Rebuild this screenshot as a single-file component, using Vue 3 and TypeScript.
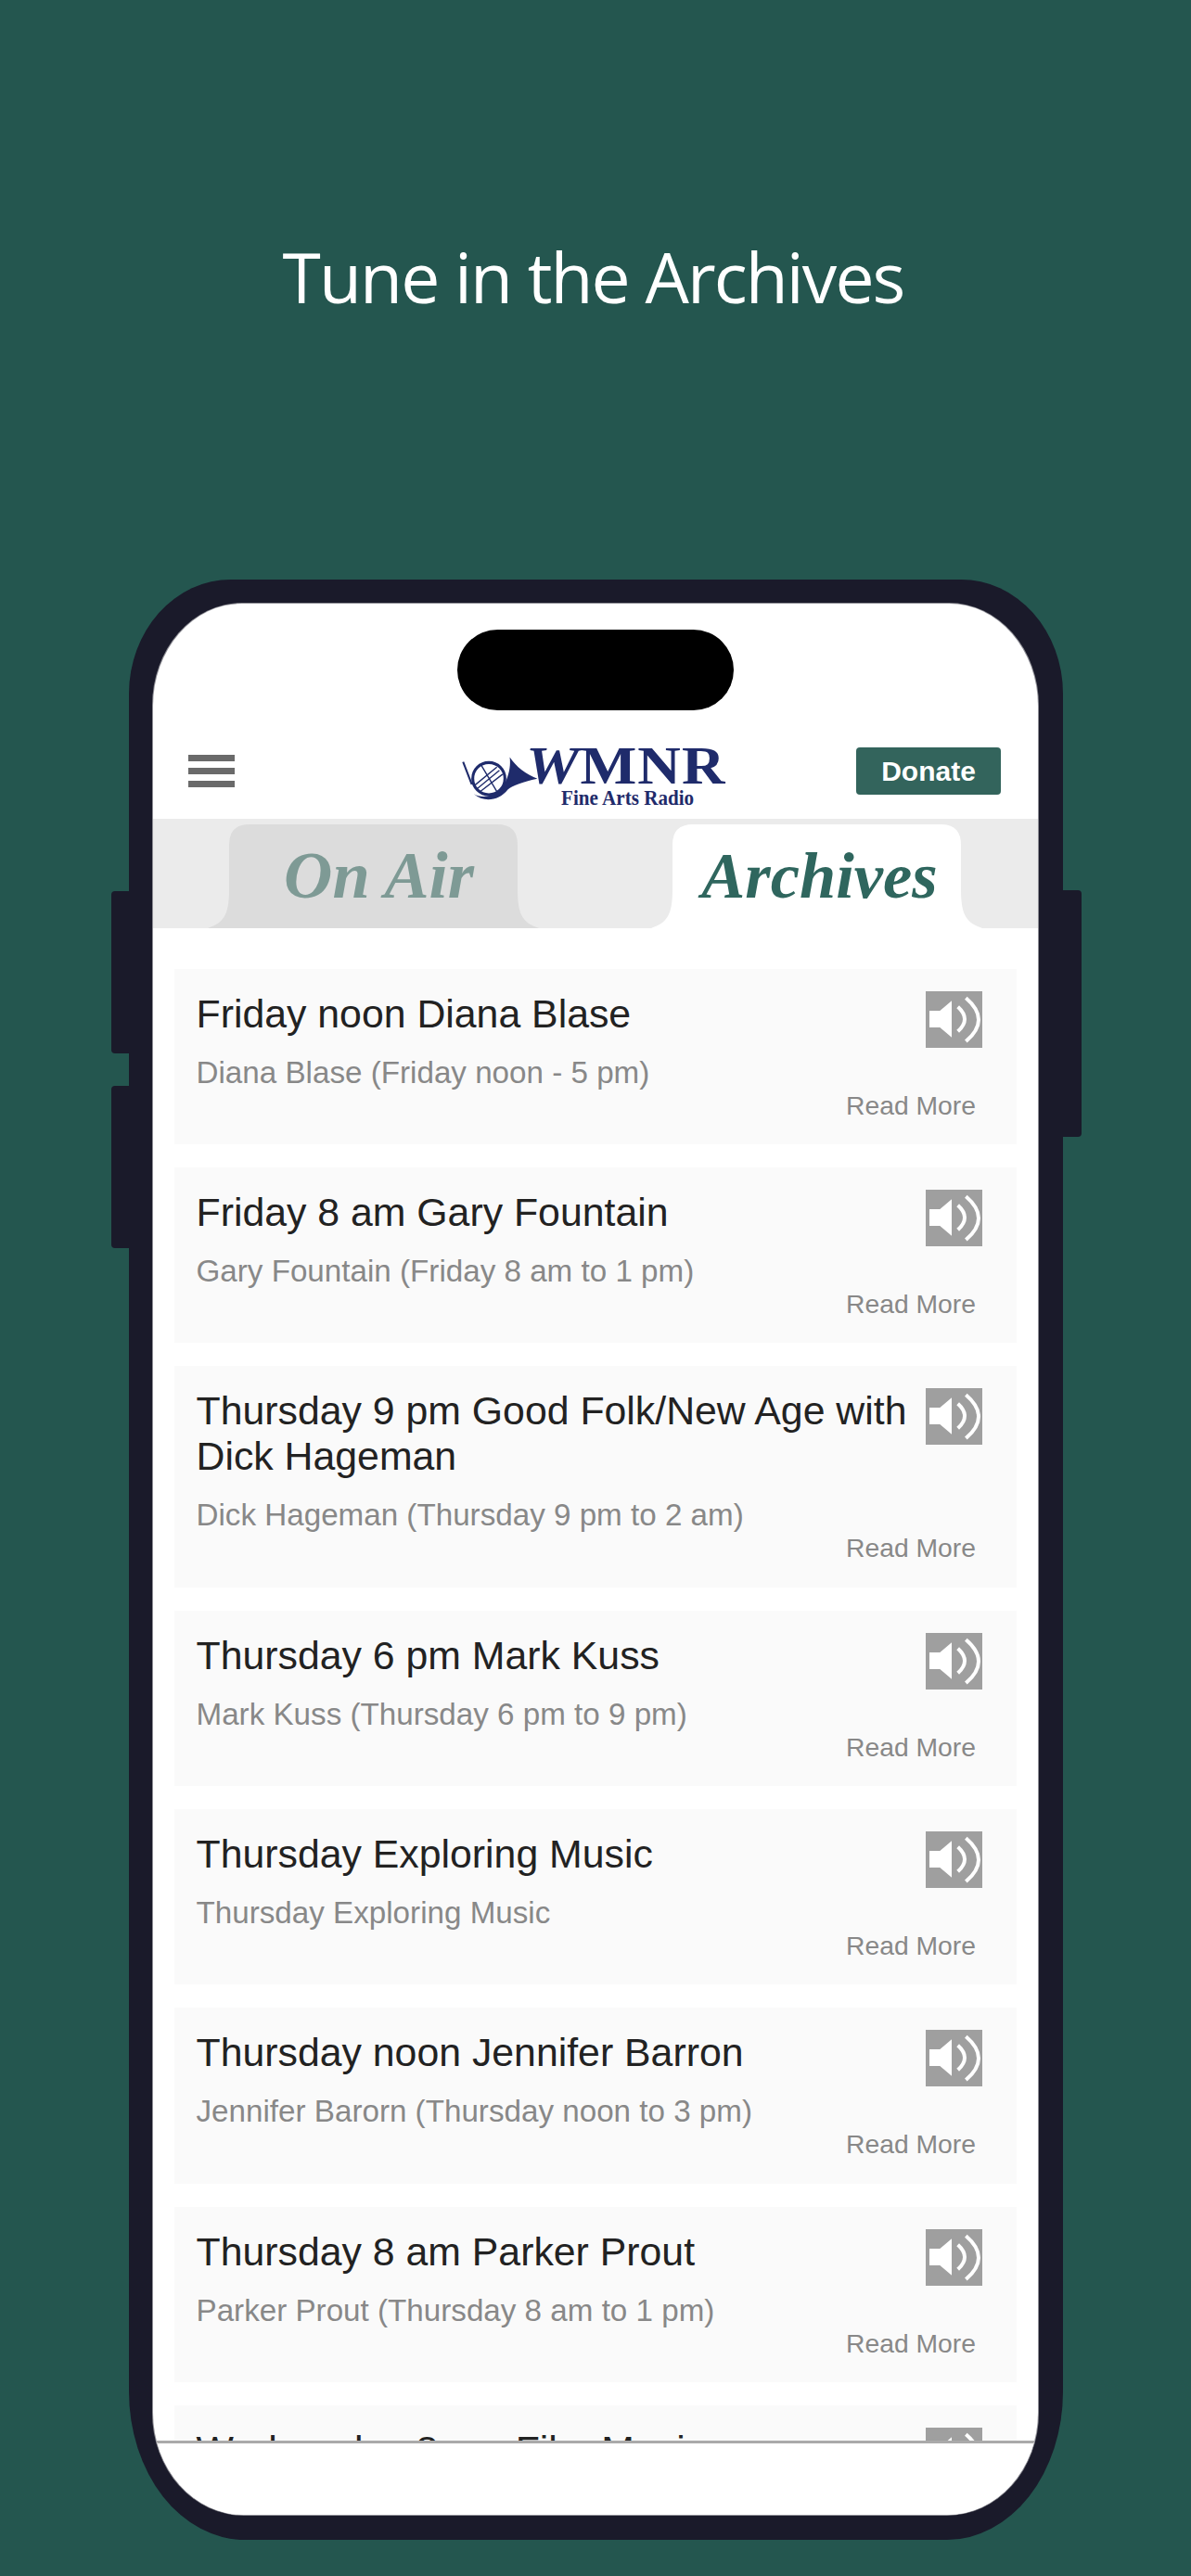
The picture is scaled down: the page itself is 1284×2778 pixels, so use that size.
<script setup lang="ts">
interface Show {
  title: string
  host: string
}

const shows: Show[] = [
  { title: 'Friday noon Diana Blase', host: 'Diana Blase (Friday noon - 5 pm)' },
  { title: 'Friday 8 am Gary Fountain', host: 'Gary Fountain (Friday 8 am to 1 pm)' },
  { title: 'Thursday 9 pm Good Folk/New Age with Dick Hageman', host: 'Dick Hageman (Thursday 9 pm to 2 am)' },
  { title: 'Thursday 6 pm Mark Kuss', host: 'Mark Kuss (Thursday 6 pm to 9 pm)' },
  { title: 'Thursday Exploring Music', host: 'Thursday Exploring Music' },
  { title: 'Thursday noon Jennifer Barron', host: 'Jennifer Barorn (Thursday noon to 3 pm)' },
  { title: 'Thursday 8 am Parker Prout', host: 'Parker Prout (Thursday 8 am to 1 pm)' },
  { title: 'Wednesday 8 pm Film Music', host: 'Film Music' }
]

const tabPath =
  'M0 112C16 106 23 100 23 70L23 22Q23 0 45 0L312 0Q334 0 334 22L334 70C334 100 341 106 357 112Z'
</script>

<template>
  <div class="page">
    <h1 class="headline">Tune in the Archives</h1>
    <div class="phone">
      <span class="side side-a"></span>
      <span class="side side-b"></span>
      <span class="side side-c"></span>
      <div class="screen">
        <div class="status"><div class="island"></div></div>
        <header class="topbar">
          <div class="burger"><span></span><span></span><span></span></div>
          <div class="logo">
            <svg class="horn" viewBox="80 95 245 150" aria-hidden="true">
              <circle cx="165" cy="172" r="50" fill="none" stroke="#1f2b6b" stroke-width="9" />
              <path d="M85 120L112 190" stroke="#1f2b6b" stroke-width="6" fill="none" />
              <path d="M122 192L190 136M128 204L198 146M136 214L208 158M140 128L190 212" stroke="#1f2b6b" stroke-width="4" fill="none" />
              <path d="M118 220C150 248 198 240 224 206C236 194 270 182 316 172C280 158 250 135 230 105C234 135 226 165 213 190C195 222 150 238 118 220Z" fill="#1f2b6b" />
            </svg>
            <div class="wordmark">
              <div class="call"><i>W</i>MNR</div>
              <div class="tagline">Fine Arts Radio</div>
            </div>
          </div>
          <button class="donate" type="button">Donate</button>
        </header>
        <nav class="tabs">
          <div class="tab tab-air">
            <svg class="tab-shape" viewBox="0 0 357 112" aria-hidden="true"><path :d="tabPath" fill="#dcdcdc" /></svg>
            <span class="tab-label">On Air</span>
          </div>
          <div class="tab tab-archives">
            <svg class="tab-shape" viewBox="0 0 357 112" aria-hidden="true"><path :d="tabPath" fill="#ffffff" /></svg>
            <span class="tab-label">Archives</span>
          </div>
        </nav>
        <main class="list">
          <article v-for="show in shows" :key="show.title" class="card">
            <div class="card-main">
              <div class="card-text">
                <h2 class="title">{{ show.title }}</h2>
                <p class="host">{{ show.host }}</p>
              </div>
              <svg class="speaker" viewBox="0 0 183 183" aria-hidden="true">
                <rect width="183" height="183" fill="#9f9f9f" />
                <path d="M12 63H46L84 31V149L46 117H12Z" fill="#fff" />
                <path d="M104 50Q148 90 104 130M130 22Q212 92 130 162" fill="none" stroke="#fff" stroke-width="12" />
              </svg>
            </div>
            <div class="more">Read More</div>
          </article>
        </main>
        <footer class="bottom"></footer>
      </div>
    </div>
  </div>
</template>

<style>
html,
body {
  margin: 0;
  background: #24564f;
}
</style>

<style scoped>
.page {
  width: 1284px;
  height: 2778px;
  overflow: hidden;
  background: #24564f;
  box-sizing: border-box;
  padding-top: 248px;
}
.headline {
  margin: 0;
  padding-right: 5px;
  height: 101px;
  line-height: 101px;
  text-align: center;
  color: #fff;
  font-family: "Open Sans", sans-serif;
  font-weight: 400;
  font-size: 75px;
  letter-spacing: -1.9px;
}
.phone {
  position: relative;
  box-sizing: border-box;
  width: 1007px;
  height: 2114px;
  margin: 276px 0 0 139px;
  padding: 26px 27px 27px 26px;
  background: #1a1a2a;
  border-radius: 110px 110px 125px 125px / 123px 123px 160px 160px;
}
.side {
  position: absolute;
  width: 24px;
  background: #1a1a2a;
}
.side-a,
.side-b {
  left: -19px;
  height: 175px;
  border-radius: 4px 0 0 4px;
}
.side-a { top: 336px; }
.side-b { top: 546px; }
.side-c {
  right: -20px;
  top: 335px;
  height: 266px;
  border-radius: 0 4px 4px 0;
}
.screen {
  position: relative;
  display: flex;
  flex-direction: column;
  height: 100%;
  overflow: hidden;
  background: #fff;
  border-radius: 96px 96px 98px 98px / 110px 110px 110px 110px;
  box-shadow: 0 0 0 1px #8f8f96;
}
.status {
  height: 154px;
  box-sizing: border-box;
  padding-top: 28px;
  display: flex;
  justify-content: center;
  flex: none;
}
.island {
  width: 298px;
  height: 87px;
  background: #000;
  border-radius: 44px;
}
.topbar {
  flex: none;
  height: 78px;
  display: flex;
  align-items: flex-start;
  padding: 0 40px 0 38px;
}
.burger {
  width: 50px;
  margin-top: 9px;
  display: flex;
  flex-direction: column;
  gap: 7px;
}
.burger span {
  display: block;
  height: 7px;
  background: #6a6a6a;
}
.logo {
  display: flex;
  align-items: flex-start;
  margin-left: 245px;
  width: 287px;
}
.horn {
  flex: none;
  width: 86px;
  height: 52px;
  margin-top: 8px;
  margin-left: -1px;
}
.wordmark {
  margin-left: -16px;
  color: #1f2b6b;
  font-family: "Liberation Serif", serif;
}
.call {
  font-weight: 700;
  font-size: 56px;
  line-height: 42px;
  height: 42px;
  letter-spacing: 1px;
  white-space: nowrap;
  transform: scaleX(1.15);
  transform-origin: left center;
}
.tagline {
  margin-left: 38px;
  margin-top: 1px;
  font-weight: 700;
  font-size: 24px;
  line-height: 24px;
  white-space: nowrap;
  transform: scaleX(0.88);
  transform-origin: left center;
}
.donate {
  margin-left: auto;
  margin-top: 1px;
  width: 156px;
  height: 51px;
  padding: 0;
  border: 0;
  border-radius: 4px;
  background: #33645c;
  color: #fff;
  font-family: "Liberation Sans", sans-serif;
  font-weight: 700;
  font-size: 30px;
}
.tabs {
  flex: none;
  height: 118px;
  box-sizing: border-box;
  padding: 6px 0 0 59px;
  display: flex;
  gap: 121px;
  background: #ebebeb;
}
.tab {
  position: relative;
  box-sizing: border-box;
  width: 357px;
  height: 112px;
  text-align: center;
  font-family: "Liberation Serif", serif;
  font-weight: 700;
  font-style: italic;
  line-height: 110px;
}
.tab-shape {
  position: absolute;
  left: 0;
  top: 0;
  width: 357px;
  height: 112px;
}
.tab-label {
  position: relative;
}
.tab-air {
  color: #7e9a95;
  padding-left: 12px;
  font-size: 72.5px;
}
.tab-archives {
  color: #2f665e;
  padding-left: 6px;
  font-size: 70.5px;
}
.list {
  flex: 1;
  min-height: 0;
  overflow: hidden;
  padding: 43.5px 23px 0;
  display: flex;
  flex-direction: column;
  gap: 25px;
}
.card {
  flex: none;
  background: #fafafa;
  padding: 24px 37px 25px 23.5px;
  font-family: "Liberation Sans", sans-serif;
}
.card-main {
  display: flex;
  justify-content: space-between;
  align-items: flex-start;
  gap: 8px;
}
.card-text {
  min-width: 0;
}
.title {
  margin: 0;
  font-weight: 400;
  font-size: 42.8px;
  line-height: 49px;
  color: #222;
}
.host {
  margin: 20px 0 0;
  font-size: 33.2px;
  line-height: 38px;
  color: #888;
}
.speaker {
  flex: none;
  width: 61px;
  height: 61px;
}
.more {
  height: 33.4px;
  line-height: 32px;
  margin-right: 7px;
  text-align: right;
  font-size: 28.3px;
  color: #888;
}
.bottom {
  flex: none;
  height: 77px;
  border-top: 3px solid #aaa;
  background: #fff;
}
</style>
